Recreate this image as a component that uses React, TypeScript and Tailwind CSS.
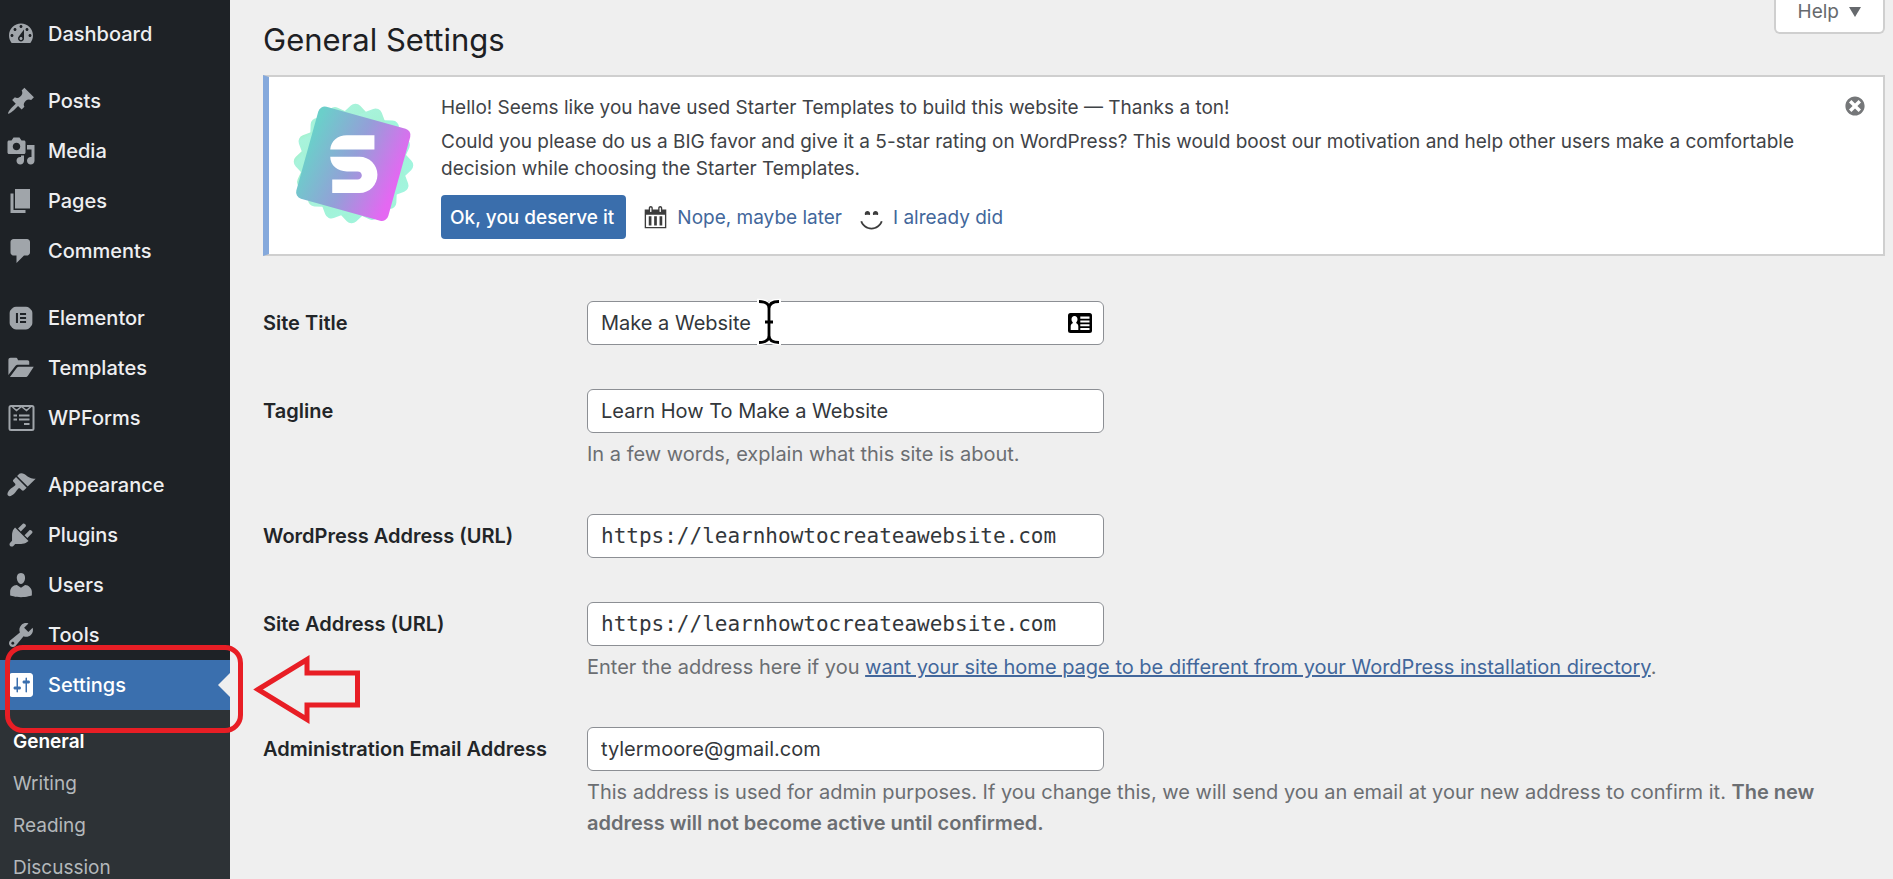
import type { ReactNode } from "react";
import { FaElementor } from "react-icons/fa";

type IconProps = { d: string; className?: string };

function Dashicon({ d, className = "size-[30px]" }: IconProps) {
  return (
    <svg viewBox="0 0 20 20" fill="currentColor" aria-hidden="true" className={`shrink-0 ${className}`}>
      <path d={d} />
    </svg>
  );
}

const icons = {
  dashboard:
    "M3.76 16h12.48c1.1-1.37 1.76-3.11 1.76-5 0-4.42-3.58-8-8-8s-8 3.58-8 8c0 1.89.66 3.63 1.76 5zM10 4c.55 0 1 .45 1 1s-.45 1-1 1-1-.45-1-1 .45-1 1-1zM6 6c.55 0 1 .45 1 1s-.45 1-1 1-1-.45-1-1 .45-1 1-1zm8 0c.55 0 1 .45 1 1s-.45 1-1 1-1-.45-1-1 .45-1 1-1zm-5.37 5.55L12 7v6c0 1.1-.9 2-2 2s-2-.9-2-2c0-.57.24-1.08.63-1.45zM4 10c.55 0 1 .45 1 1s-.45 1-1 1-1-.45-1-1 .45-1 1-1zm12 0c.55 0 1 .45 1 1s-.45 1-1 1-1-.45-1-1 .45-1 1-1zm-5 3c0-.55-.45-1-1-1s-1 .45-1 1 .45 1 1 1 1-.45 1-1z",
  posts:
    "M10.44 3.02l1.82-1.82 6.36 6.35-1.83 1.82c-1.05-.68-2.48-.57-3.41.36l-.75.75c-.92.93-1.04 2.35-.35 3.41l-1.83 1.82-2.41-2.41-2.8 2.79c-.42.42-3.38 2.71-3.8 2.29s1.86-3.39 2.28-3.81l2.79-2.79L4.1 9.36l1.83-1.82c1.05.69 2.48.57 3.4-.36l.75-.75c.93-.92 1.05-2.35.36-3.41z",
  media:
    "M13 11V4c0-.55-.45-1-1-1h-1.67L9 1H5L3.67 3H2c-.55 0-1 .45-1 1v7c0 .55.45 1 1 1h10c.55 0 1-.45 1-1zM7 4.5c1.38 0 2.5 1.12 2.5 2.5S8.38 9.5 7 9.5 4.5 8.38 4.5 7 5.62 4.5 7 4.5zM14 6h5v10.5c0 1.38-1.12 2.5-2.5 2.5S14 17.88 14 16.5s1.12-2.5 2.5-2.5c.17 0 .34.02.5.05V9h-3V6zm-4 8.05V13h2v3.5c0 1.38-1.12 2.5-2.5 2.5S7 17.88 7 16.5 8.12 14 9.5 14c.17 0 .34.02.5.05z",
  pages: "M6 15V2h10v13H6zm-1 1h8v2H3V5h2v11z",
  comments: "M5 2h9c1.1 0 2 .9 2 2v7c0 1.1-.9 2-2 2h-2l-5 5v-5H5c-1.1 0-2-.9-2-2V4c0-1.1.9-2 2-2z",
  templates:
    "M1.6 14.6V4.6c0-.9.6-1.5 1.5-1.5h3.3c.7 0 1.1.3 1.3.9l.3.9h6.3c.8 0 1.2.5 1.2 1.2v1.8H8.3c-.9 0-1.6.3-2.2 1zM2.6 16l4.5-6c.4-.5.9-.8 1.5-.8h9.9l-3.9 5.9c-.4.6-.9.9-1.6.9z",
  appearance:
    "M14.48 11.06L7.41 3.99l1.5-1.5c.5-.56 2.3-.47 3.51.32 1.21.8 1.43 1.28 2.91 2.1 1.18.64 2.45 1.26 4.45.85zm-.71.71L6.7 4.7 4.93 6.47c-.39.39-.39 1.02 0 1.41l1.06 1.06c.39.39.39 1.03 0 1.42-.6.6-1.43 1.11-2.21 1.69-.35.26-.7.53-1.01.84C1.43 14.23.4 16.08 1.4 17.07c.99 1 2.84-.03 4.18-1.36.31-.31.58-.66.85-1.02.57-.78 1.08-1.61 1.69-2.21.39-.39 1.02-.39 1.41 0l1.06 1.06c.39.39 1.02.39 1.41 0z",
  plugins:
    "M13.11 4.36L9.87 7.6 8 5.73l3.24-3.24c.35-.34 1.05-.2 1.56.32.52.51.66 1.21.31 1.55zm-8 1.77l.91-1.12 9.01 9.01-1.19.84c-.71.71-2.63 1.16-3.82 1.16H6.14L4.9 17.26c-.59.59-1.54.59-2.12 0-.59-.58-.59-1.53 0-2.12l1.24-1.24v-3.88c0-1.13.4-3.19 1.09-3.89zm7.26 3.97l3.24-3.24c.34-.35 1.04-.21 1.55.31.52.51.66 1.21.31 1.55l-3.24 3.25z",
  users:
    "M10 9.25c-2.27 0-2.73-3.44-2.73-3.44C7 4.02 7.82 2 9.97 2c2.16 0 2.98 2.02 2.71 3.81 0 0-.41 3.44-2.68 3.44zm0 2.57L12.72 10c2.39 0 4.52 2.33 4.52 4.53v2.49s-3.65 1.13-7.24 1.13c-3.65 0-7.24-1.13-7.24-1.13v-2.49c0-2.25 1.94-4.48 4.47-4.48z",
  tools:
    "M16.68 9.77c-1.34 1.34-3.3 1.67-4.95.99l-5.41 6.52c-.99.99-2.59.99-3.58 0s-.99-2.59 0-3.57l6.52-5.42c-.68-1.65-.35-3.61.99-4.95 1.28-1.28 3.12-1.62 4.72-1.06l-2.89 2.89 2.82 2.82 2.86-2.87c.53 1.58.18 3.39-1.08 4.65zM3.81 16.21c.4.39 1.04.39 1.43 0 .4-.4.4-1.04 0-1.43-.39-.4-1.03-.4-1.43 0-.39.39-.39 1.03 0 1.43z",
  settings:
    "M18 16V4c0-1.1-.9-2-2-2H4c-1.1 0-2 .9-2 2v12c0 1.1.9 2 2 2h12c1.1 0 2-.9 2-2zM8 11h1c.55 0 1 .45 1 1s-.45 1-1 1H8v1.5c0 .28-.22.5-.5.5s-.5-.22-.5-.5V13H6c-.55 0-1-.45-1-1s.45-1 1-1h1V5.5c0-.28.22-.5.5-.5s.5.22.5.5V11zm5-2h-1c-.55 0-1-.45-1-1s.45-1 1-1h1V5.5c0-.28.22-.5.5-.5s.5.22.5.5V7h1c.55 0 1 .45 1 1s-.45 1-1 1h-1v5.5c0 .28-.22.5-.5.5s-.5-.22-.5-.5V9z",
  calendar:
    "M15 4h3v14H2V4h3V3c0-.83.67-1.5 1.5-1.5S8 2.17 8 3v1h4V3c0-.83.67-1.5 1.5-1.5S15 2.17 15 3v1zM6 3v2.5c0 .28.22.5.5.5s.5-.22.5-.5V3c0-.28-.22-.5-.5-.5S6 2.72 6 3zm7 0v2.5c0 .28.22.5.5.5s.5-.22.5-.5V3c0-.28-.22-.5-.5-.5s-.5.22-.5.5zm4 14V8H3v9h14zM7 16V9H5v7h2zm4 0V9H9v7h2zm4 0V9h-2v7h2z",
  smiley:
    "M7 5.2c1.1 0 2 .89 2 2 0 .37-.11.71-.28 1C8.72 8.2 8 8 7 8s-1.72.2-1.72.2c-.17-.29-.28-.63-.28-1 0-1.11.9-2 2-2zm6 0c1.11 0 2 .89 2 2 0 .37-.11.71-.28 1 0 0-.72-.2-1.72-.2s-1.72.2-1.72.2c-.17-.29-.28-.63-.28-1 0-1.11.89-2 2-2zm-3 13.7c3.72 0 7.03-2.36 8.23-5.88l-1.32-.46C15.9 15.52 13.12 17.5 10 17.5s-5.9-1.98-6.91-4.94l-1.32.46c1.2 3.52 4.51 5.88 8.23 5.88z",
  dismiss:
    "M10 2c4.42 0 8 3.58 8 8s-3.58 8-8 8-8-3.58-8-8 3.58-8 8-8zm5 11l-3-3 3-3-2-2-3 3-3-3-2 2 3 3-3 3 2 2 3-3 3 3z",
};

function WPFormsIcon() {
  return (
    <svg viewBox="0 0 30 30" fill="none" stroke="currentColor" aria-hidden="true" className="size-[30px] shrink-0">
      <rect x="3.5" y="3" width="24" height="24" rx="1.5" strokeWidth="2" />
      <path d="M6 3.5l4.5 4 5-4 5 4 4.5-4" strokeWidth="1.6" />
      <path d="M7.5 12.5h3.5M13 12.5h10.5M7.5 16.5h3.5M13 16.5h10.5M18 21h5.5" strokeWidth="2" />
    </svg>
  );
}

const menuGroups: { label: string; icon: ReactNode; active?: boolean }[][] = [
  [{ label: "Dashboard", icon: <Dashicon d={icons.dashboard} /> }],
  [
    { label: "Posts", icon: <Dashicon d={icons.posts} /> },
    { label: "Media", icon: <Dashicon d={icons.media} /> },
    { label: "Pages", icon: <Dashicon d={icons.pages} /> },
    { label: "Comments", icon: <Dashicon d={icons.comments} /> },
  ],
  [
    { label: "Elementor", icon: <FaElementor className="mx-[2px] size-[26px] shrink-0 rounded-full" /> },
    { label: "Templates", icon: <Dashicon d={icons.templates} /> },
    { label: "WPForms", icon: <WPFormsIcon /> },
  ],
  [
    { label: "Appearance", icon: <Dashicon d={icons.appearance} /> },
    { label: "Plugins", icon: <Dashicon d={icons.plugins} /> },
    { label: "Users", icon: <Dashicon d={icons.users} /> },
    { label: "Tools", icon: <Dashicon d={icons.tools} /> },
    { label: "Settings", icon: <Dashicon d={icons.settings} />, active: true },
  ],
];

const submenu = ["General", "Writing", "Reading", "Discussion"];

// Red box and arrow that point out the Settings item
function Callout() {
  return (
    <>
      <span className="pointer-events-none absolute top-[-15px] left-[5px] z-10 h-[88px] w-[238px] rounded-[18px] border-5 border-[#e81e25]" />
      <svg
        viewBox="0 0 108 72"
        fill="none"
        stroke="#e81e25"
        strokeWidth="5"
        aria-hidden="true"
        className="pointer-events-none absolute top-[-6px] left-[253px] z-10 h-[72px] w-[108px]"
      >
        <path d="M5 35.5L54 5.5V19H104.5V51H54V65.5z" />
      </svg>
    </>
  );
}

function Sidebar() {
  return (
    <nav className="flex w-[230px] shrink-0 flex-col bg-[#1e2226] pt-[9px] text-[20px] font-medium text-[#eeeff1]">
      <div className="flex flex-col gap-[17px]">
        {menuGroups.map((group) => (
          <ul key={group[0].label}>
            {group.map((item) => (
              <li key={item.label} className="relative">
                <a
                  href="#"
                  className={`flex h-[50px] items-center gap-3 pl-[6px] ${
                    item.active ? "bg-[#3a6fae] text-white" : ""
                  }`}
                >
                  <span className={item.active ? "text-white" : "text-[#a0a5aa]"}>{item.icon}</span>
                  {item.label}
                </a>
                {item.active && (
                  <>
                    <span className="absolute top-[13px] right-0 border-y-12 border-r-12 border-y-transparent border-r-[#efefef]" />
                    <Callout />
                  </>
                )}
              </li>
            ))}
          </ul>
        ))}
      </div>
      <ul className="flex grow flex-col gap-[22px] bg-[#2d3236] pt-[22px] pl-[13px] text-[19px] leading-5 font-normal text-[#b4b8bb]">
        {submenu.map((name) => (
          <li key={name}>
            <a href="#" className={name === "General" ? "font-semibold text-white" : ""}>
              {name}
            </a>
          </li>
        ))}
      </ul>
    </nav>
  );
}

function StarterLogo() {
  return (
    <svg viewBox="0 0 370 370" aria-hidden="true" className="mt-2 size-[123px] shrink-0">
      <defs>
        <linearGradient id="badge" gradientUnits="userSpaceOnUse" x1="0" y1="220" x2="370" y2="180">
          <stop offset="0" stopColor="#96eda0" />
          <stop offset="0.15" stopColor="#a8f3dc" />
          <stop offset="0.5" stopColor="#a0f0cc" />
          <stop offset="1" stopColor="#a2f6e4" />
        </linearGradient>
        <linearGradient id="tile" x1="0" y1="0.35" x2="1" y2="0.5">
          <stop offset="0" stopColor="#6bcfca" />
          <stop offset="0.5" stopColor="#949fd8" />
          <stop offset="1" stopColor="#e468f2" />
        </linearGradient>
      </defs>
      {/* four turned squares give the sixteen points of the badge */}
      <g fill="url(#badge)">
        <rect x="52" y="52" width="266" height="266" rx="20" transform="rotate(2 185 185)" />
        <rect x="52" y="52" width="266" height="266" rx="20" transform="rotate(24.5 185 185)" />
        <rect x="52" y="52" width="266" height="266" rx="20" transform="rotate(47 185 185)" />
        <rect x="52" y="52" width="266" height="266" rx="20" transform="rotate(69.5 185 185)" />
      </g>
      <rect x="41" y="42" width="287" height="287" rx="20" fill="url(#tile)" transform="rotate(15.5 184 185)" />
      <path
        fill="#fff"
        d="M248 100v43H115c2-25 22-43 50-43zM115 165h88c30 0 54 24 54 54s-24 55-54 55h-82v-41h76c8 0 13-5 13-12s-5-12-13-12h-32c-28 0-50-18-50-44z"
      />
    </svg>
  );
}

function Notice() {
  return (
    <section className="mt-[15px] flex items-start border-2 border-l-6 border-[#cfcfcf] border-l-[#85a9dc] bg-white pt-[17px] pr-4 pb-[15px] pl-[23px] text-[19px] leading-[27px] text-[#3f4347]">
      <StarterLogo />
      <div className="ml-[26px] min-w-0 flex-1">
        <p>Hello! Seems like you have used Starter Templates to build this website — Thanks a ton!</p>
        <p className="mt-[7px]">
          Could you please do us a BIG favor and give it a 5-star rating on WordPress? This would boost our motivation
          and help other users make a comfortable decision while choosing the Starter Templates.
        </p>
        <div className="mt-[13px] flex items-center text-[#42679b]">
          <button type="button" className="h-11 rounded-sm bg-[#3a6eac] pr-3 pl-[9px] font-medium text-white">
            Ok, you deserve it
          </button>
          <Dashicon d={icons.calendar} className="ml-4 size-[27px] text-[#3c3c3c]" />
          <a href="#" className="ml-2">
            Nope, maybe later
          </a>
          <Dashicon d={icons.smiley} className="ml-4 size-[27px] text-[#3c3c3c]" />
          <a href="#" className="ml-2">
            I already did
          </a>
        </div>
      </div>
      <button type="button" aria-label="Dismiss this notice" className="text-[#757779]">
        <Dashicon d={icons.dismiss} className="size-6" />
      </button>
    </section>
  );
}

type FieldProps = {
  id: string;
  label: string;
  value: string;
  type?: string;
  mono?: boolean;
  overlay?: ReactNode;
  children?: ReactNode;
};

function Field({ id, label, value, type = "text", mono, overlay, children }: FieldProps) {
  return (
    <div className="grid grid-cols-[324px_minmax(0,1fr)] py-[22px]">
      <label htmlFor={id} className="text-[20px] leading-11 font-semibold text-[#222528]">
        {label}
      </label>
      <div>
        <div className="relative max-w-[517px]">
          <input
            id={id}
            type={type}
            defaultValue={value}
            className={`block h-11 w-full rounded-md border border-[#8c8f94] bg-white px-[13px] text-[#33373b] ${
              mono ? "font-['DejaVu_Sans_Mono',monospace] text-[21px]" : "text-[20px]"
            }`}
          />
          {overlay}
        </div>
        {children && <p className="mt-[6px] text-[20px] leading-[31px] text-[#6b6e72]">{children}</p>}
      </div>
    </div>
  );
}

function ContactCardIcon() {
  return (
    <svg viewBox="0 0 24 20" aria-hidden="true" className="absolute top-3 right-3 h-5 w-6">
      <rect width="24" height="20" rx="2.5" fill="#000" />
      <path
        fill="#fff"
        d="M6.5 3c1.9 0 3 1.4 3 3.2 0 1.3-.5 2.3-1.2 2.9v1.2c1.4.5 2 1.5 2 3V17H2.700v-3.700c0-1.500.6-2.500 2-3V9.100c-.7-.6-1.200-1.600-1.200-2.900C3.500 4.400 4.600 3 6.500 3zM12.300 3.500H21.500v2.200h-9.200zM12.300 7.500H21.500v2h-9.200zM12.300 11.300H21.500v2h-9.200zM12.300 15.100H21.500v2h-9.200z"
      />
    </svg>
  );
}

// Text cursor resting in the title box
function TextCursor() {
  const beam = "M2 3.5c6 0 10 2 10 7v27c0 5-4 7-10 7M22 3.5c-6 0-10 2-10 7M12 37.5c0 5 4 7 10 7M8 24h8";
  return (
    <svg viewBox="0 0 24 48" fill="none" aria-hidden="true" className="absolute top-[-3px] left-[170px] h-12 w-6">
      <path d={beam} stroke="#fff" strokeWidth="5.5" strokeLinecap="square" />
      <path d={beam} stroke="#000" strokeWidth="2.8" />
    </svg>
  );
}

export default function App() {
  return (
    <div className="flex min-h-screen bg-[#efefef] font-[Inter,sans-serif]">
      <Sidebar />
      <main className="min-w-0 flex-1 pr-2 pl-[33px]">
        <header className="flex items-start justify-between">
          <h1 className="pt-5 text-[31px] leading-10 text-[#1d2023]">General Settings</h1>
          <button
            type="button"
            className="flex h-[34px] items-center gap-[10px] rounded-b-md border-2 border-t-0 border-[#cfcfcf] bg-white px-[22px] pb-2 text-[19px] text-[#66696d]"
          >
            Help
            <svg viewBox="0 0 12 10" fill="currentColor" aria-hidden="true" className="h-[10px] w-3">
              <path d="M0 0h12L6 10z" />
            </svg>
          </button>
        </header>

        <Notice />

        <form className="mt-[23px]">
          <Field
            id="blogname"
            label="Site Title"
            value="Make a Website"
            overlay={
              <>
                <TextCursor />
                <ContactCardIcon />
              </>
            }
          />
          <Field id="blogdescription" label="Tagline" value="Learn How To Make a Website">
            In a few words, explain what this site is about.
          </Field>
          <Field id="siteurl" label="WordPress Address (URL)" value="https://learnhowtocreateawebsite.com" type="url" mono />
          <Field id="home" label="Site Address (URL)" value="https://learnhowtocreateawebsite.com" type="url" mono>
            Enter the address here if you{" "}
            <a href="#" className="text-[#42679b] underline">
              want your site home page to be different from your WordPress installation directory
            </a>
            .
          </Field>
          <Field id="admin_email" label="Administration Email Address" value="tylermoore@gmail.com" type="email">
            This address is used for admin purposes. If you change this, we will send you an email at your new address to
            confirm it. <strong className="font-semibold">The new address will not become active until confirmed.</strong>
          </Field>
        </form>
      </main>
    </div>
  );
}
